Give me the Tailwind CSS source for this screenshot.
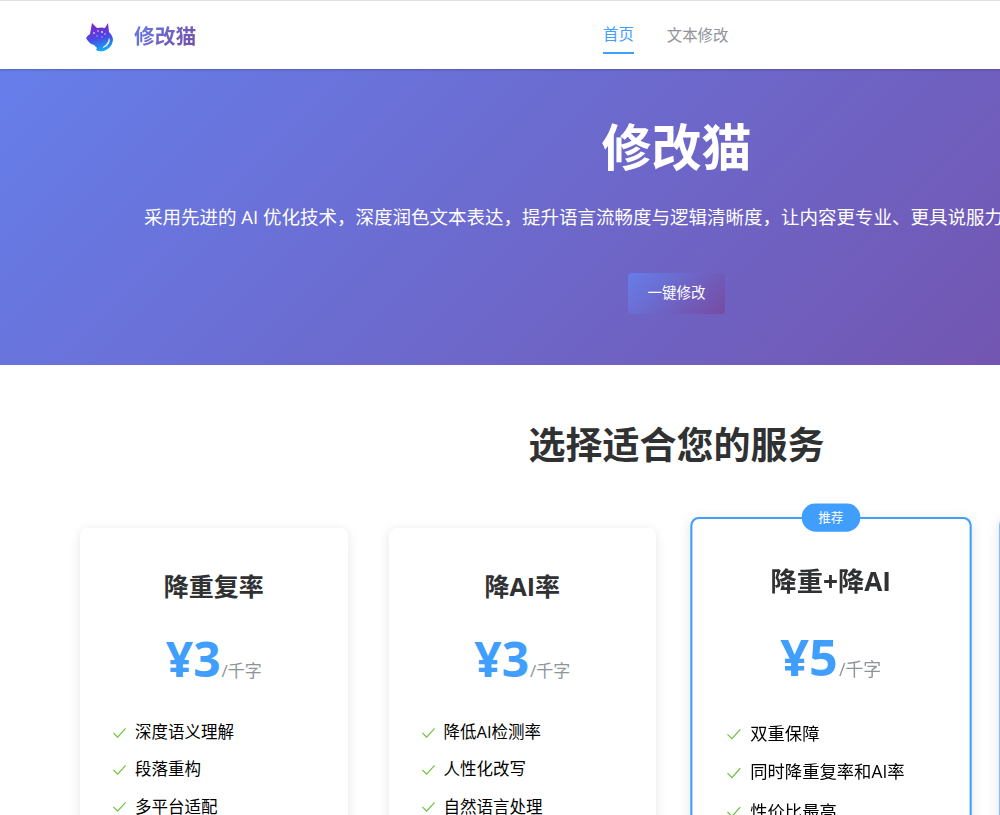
<!DOCTYPE html>
<html lang="zh-CN">
<head>
  <meta charset="UTF-8" />
  <meta name="viewport" content="width=device-width, initial-scale=1.0"/>
  <title>修改猫</title>
  <script src="https://cdn.jsdelivr.net/npm/@tailwindcss/browser@4"></script>
</head>
<body class="h-[815px] overflow-hidden bg-white font-['Open_Sans','Noto_Sans_CJK_SC',sans-serif]">
  <div class="w-[1353px]">
    <!-- Nav -->
    <header class="relative z-10 flex h-[69px] items-center border-t border-[#e0e0e0] bg-white px-[80px] shadow-[0_1px_2px_rgba(0,0,0,0.2)]">
      <div class="flex items-center gap-[18px] pl-[4px] pt-[3px]">
        <svg class="h-[32px] w-[32px]" viewBox="0 0 32 32">
          <defs>
            <linearGradient id="cat" x1="0.3" y1="0" x2="0.55" y2="1">
              <stop offset="0" stop-color="#8a1fc4"/>
              <stop offset="0.55" stop-color="#4a4ae6"/>
              <stop offset="1" stop-color="#0fb0f5"/>
            </linearGradient>
          </defs>
          <path d="M8 2 L13 7 Q17 6 21 7 L24 2 L25 11 Q29 15 29 19 Q28 27 20 30 Q15 31 12 29 L13 27 Q11 25 10 24 Q6 23 4 20 L2 17 Q4 14 6 13 Z" fill="url(#cat)"/>
          <path d="M19 26 Q24 23 25 17 L26 19 Q25 25 19 27 Z" fill="#fff" opacity="0.9"/>
          <circle cx="10" cy="12" r="0.9" fill="#fff" opacity="0.7"/>
          <circle cx="14" cy="10" r="0.8" fill="#fff" opacity="0.8"/>
          <circle cx="18" cy="11" r="1" fill="#fff" opacity="0.8"/>
          <circle cx="21" cy="13" r="0.8" fill="#fff" opacity="0.7"/>
          <circle cx="13" cy="15" r="0.7" fill="#fff" opacity="0.6"/>
          <circle cx="18" cy="16" r="0.7" fill="#fff" opacity="0.6"/>
        </svg>
        <span class="bg-[linear-gradient(135deg,#667eea,#764ba2)] bg-clip-text text-[20.8px] font-bold text-transparent">修改猫</span>
      </div>
      <nav class="absolute left-[603px] top-0 flex gap-[33px] text-[15.4px]">
        <a class="flex h-[53px] items-center border-b-2 border-[#409eff] pt-[20px] pb-[3px] text-[#409eff]">首页</a>
        <a class="flex h-[53px] items-center pt-[20px] pb-[3px] text-[#909399]">文本修改</a>
      </nav>
    </header>

    <!-- Hero -->
    <section class="flex h-[296px] flex-col items-center bg-[linear-gradient(135deg,#667eea,#764ba2)] text-white">
      <h1 class="mt-[46px] text-[50px] leading-[65px] font-bold">修改猫</h1>
      <p class="mt-[24px] self-start pl-[144px] text-[18.5px] leading-[26px] whitespace-nowrap">采用先进的 AI 优化技术，深度润色文本表达，提升语言流畅度与逻辑清晰度，让内容更专业、更具说服力</p>
      <button class="mt-[43px] h-[41px] w-[97px] rounded-[4px] bg-[linear-gradient(135deg,#667eea,#764ba2)] pb-[2px] text-[14.5px]">一键修改</button>
    </section>

    <!-- Pricing -->
    <section class="px-[80px] pt-[55px]">
      <h2 class="text-center text-[37px] leading-[49px] font-bold text-[#303133]">选择适合您的服务</h2>
      <div class="mt-[59px] grid grid-cols-4 gap-[41px]">
        <div class="rounded-[8px] bg-white px-[32px] pt-[40px] shadow-[0_2px_12px_rgba(0,0,0,0.1)]">
          <h3 class="text-center text-[25px] leading-[36px] font-bold text-[#303133]">降重复率</h3>
          <div class="mt-[22px] flex items-baseline justify-center">
            <span class="text-[48px] leading-[65px] font-bold text-[#409eff]">¥3</span>
            <span class="ml-[1px] text-[17px] text-[#909399]">/千字</span>
          </div>
          <ul class="mt-[29px] space-y-[13.4px] text-[16.5px] leading-[24px] text-[#000]">
            <li class="flex items-center gap-[8px]"><svg class="h-[15px] w-[15px] text-[#67c23a]" viewBox="0 0 16 16" fill="none" stroke="currentColor" stroke-width="1.2"><path d="M1.5 8.5 L6 13 L14.5 3.5"/></svg>深度语义理解</li>
            <li class="flex items-center gap-[8px]"><svg class="h-[15px] w-[15px] text-[#67c23a]" viewBox="0 0 16 16" fill="none" stroke="currentColor" stroke-width="1.2"><path d="M1.5 8.5 L6 13 L14.5 3.5"/></svg>段落重构</li>
            <li class="flex items-center gap-[8px]"><svg class="h-[15px] w-[15px] text-[#67c23a]" viewBox="0 0 16 16" fill="none" stroke="currentColor" stroke-width="1.2"><path d="M1.5 8.5 L6 13 L14.5 3.5"/></svg>多平台适配</li>
          </ul>
        </div>
        <div class="rounded-[8px] bg-white px-[32px] pt-[40px] shadow-[0_2px_12px_rgba(0,0,0,0.1)]">
          <h3 class="text-center text-[25px] leading-[36px] font-bold text-[#303133]">降AI率</h3>
          <div class="mt-[22px] flex items-baseline justify-center">
            <span class="text-[48px] leading-[65px] font-bold text-[#409eff]">¥3</span>
            <span class="ml-[1px] text-[17px] text-[#909399]">/千字</span>
          </div>
          <ul class="mt-[29px] space-y-[13.4px] text-[16.5px] leading-[24px] text-[#000]">
            <li class="flex items-center gap-[8px]"><svg class="h-[15px] w-[15px] text-[#67c23a]" viewBox="0 0 16 16" fill="none" stroke="currentColor" stroke-width="1.2"><path d="M1.5 8.5 L6 13 L14.5 3.5"/></svg>降低AI检测率</li>
            <li class="flex items-center gap-[8px]"><svg class="h-[15px] w-[15px] text-[#67c23a]" viewBox="0 0 16 16" fill="none" stroke="currentColor" stroke-width="1.2"><path d="M1.5 8.5 L6 13 L14.5 3.5"/></svg>人性化改写</li>
            <li class="flex items-center gap-[8px]"><svg class="h-[15px] w-[15px] text-[#67c23a]" viewBox="0 0 16 16" fill="none" stroke="currentColor" stroke-width="1.2"><path d="M1.5 8.5 L6 13 L14.5 3.5"/></svg>自然语言处理</li>
          </ul>
        </div>
        <div class="relative scale-105 rounded-[8px] border-2 border-[#409eff] bg-white px-[32px] pt-[40px] shadow-[0_2px_12px_rgba(0,0,0,0.1)]">
          <span class="absolute -top-[15px] left-1/2 flex h-[27px] w-[56px] -translate-x-1/2 items-center justify-center rounded-[14px] bg-[#409eff] text-[12px] text-white">推荐</span>
          <h3 class="text-center text-[25px] leading-[36px] font-bold text-[#303133]">降重+降AI</h3>
          <div class="mt-[22px] flex items-baseline justify-center">
            <span class="text-[48px] leading-[65px] font-bold text-[#409eff]">¥5</span>
            <span class="ml-[1px] text-[17px] text-[#909399]">/千字</span>
          </div>
          <ul class="mt-[29px] space-y-[13.4px] text-[16.5px] leading-[24px] text-[#000]">
            <li class="flex items-center gap-[8px]"><svg class="h-[15px] w-[15px] text-[#67c23a]" viewBox="0 0 16 16" fill="none" stroke="currentColor" stroke-width="1.2"><path d="M1.5 8.5 L6 13 L14.5 3.5"/></svg>双重保障</li>
            <li class="flex items-center gap-[8px]"><svg class="h-[15px] w-[15px] text-[#67c23a]" viewBox="0 0 16 16" fill="none" stroke="currentColor" stroke-width="1.2"><path d="M1.5 8.5 L6 13 L14.5 3.5"/></svg>同时降重复率和AI率</li>
            <li class="flex items-center gap-[8px]"><svg class="h-[15px] w-[15px] text-[#67c23a]" viewBox="0 0 16 16" fill="none" stroke="currentColor" stroke-width="1.2"><path d="M1.5 8.5 L6 13 L14.5 3.5"/></svg>性价比最高</li>
          </ul>
        </div>
        <div class="h-[440px] scale-105 rounded-[8px] border-2 border-[#409eff] bg-white shadow-[0_2px_12px_rgba(0,0,0,0.1)]"></div>
      </div>
    </section>
  </div>
</body>
</html>
